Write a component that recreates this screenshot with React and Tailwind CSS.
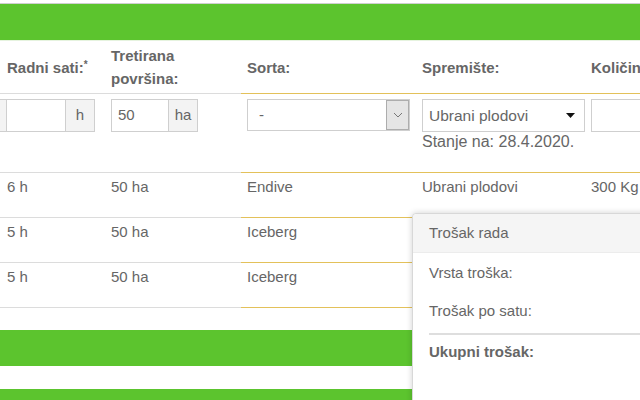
import React from "react";

function Line() {
  return (
    <div className="flex h-px">
      <div className="w-[241px] shrink-0 bg-[#dcdcdc]" />
      <div className="flex-1 bg-[#e3c15a]" />
    </div>
  );
}

function DataRow({ hours, area, sort, store, qty }) {
  return (
    <div className="flex h-[44px] pt-[5px] text-[15px] leading-[18px] text-[#666]">
      <div className="w-[104px] shrink-0 pl-[7px]">{hours}</div>
      <div className="w-[137px] shrink-0 pl-[7px]">{area}</div>
      <div className="w-[175px] shrink-0 pl-[6px]">{sort}</div>
      <div className="w-[169px] shrink-0 pl-[6px]">{store}</div>
      <div className="min-w-0 flex-1 pl-[6px] whitespace-nowrap">{qty}</div>
    </div>
  );
}

export default function App() {
  return (
    <div
      className="relative w-[640px] h-[400px] overflow-hidden bg-white"
      style={{ fontFamily: '"Liberation Sans", Arial, sans-serif' }}
    >
      <div className="h-[3px] bg-white border-b border-[#cfcfcf] box-content" />
      <div className="h-[36px] bg-[#5cc42e]" />
      <div className="h-px bg-[#e6f3df]" />

      {/* header */}
      <div className="flex h-[52px] items-center text-[15px] font-bold text-[#666] leading-[23px]">
        <div className="w-[104px] shrink-0 pl-[7px] whitespace-nowrap">
          Radni sati:<span className="text-[10px] align-top relative top-[-3px]">*</span>
        </div>
        <div className="w-[137px] shrink-0 pl-[7px]">
          Tretirana
          <br />
          površina:
        </div>
        <div className="w-[175px] shrink-0 pl-[6px]">Sorta:</div>
        <div className="w-[169px] shrink-0 pl-[6px]">Spremište:</div>
        <div className="min-w-0 flex-1 pl-[6px] whitespace-nowrap overflow-hidden">Količina:</div>
      </div>
      <Line />

      {/* input row */}
      <div className="flex h-[78px] pt-[5px] text-[15px] text-[#666]">
        <div className="w-[104px] shrink-0 flex items-start">
          <div className="w-[7px] h-[33px] bg-[#f3f3f3] border border-l-0 border-[#cfcfcf]" />
          <div className="w-[58px] h-[33px] border-y border-[#cfcfcf]" />
          <div className="w-[30px] h-[33px] bg-[#f3f3f3] border border-[#cfcfcf] flex items-center justify-center">
            h
          </div>
        </div>
        <div className="w-[137px] shrink-0 pl-[7px] flex items-start">
          <div className="w-[57px] h-[33px] border border-r-0 border-[#cfcfcf] flex items-center pl-[6px]">
            50
          </div>
          <div className="w-[30px] h-[33px] bg-[#f3f3f3] border border-[#cfcfcf] flex items-center justify-center">
            ha
          </div>
        </div>
        <div className="w-[175px] shrink-0 pl-[6px]">
          <div className="w-[163px] h-[32px] border border-[#cfcfcf] flex items-center justify-between">
            <span className="pl-[11px]">-</span>
            <div className="w-[23px] h-[30px] bg-[#e5e5e5] border border-[#adadad] flex items-center justify-center">
              <svg width="10" height="6" viewBox="0 0 10 6" fill="none">
                <path d="M1 1l4 4 4-4" stroke="#777" strokeWidth="1" />
              </svg>
            </div>
          </div>
        </div>
        <div className="w-[169px] shrink-0 pl-[6px]">
          <div className="w-[163px] h-[33px] border border-[#cfcfcf] flex items-center justify-between pl-[6px] pr-[9px] text-[15.5px]">
            <span>Ubrani plodovi</span>
            <svg width="9" height="5" viewBox="0 0 9 5">
              <path d="M0 0h9L4.5 5z" fill="#111" />
            </svg>
          </div>
          <div className="text-[16px] leading-[20px]">Stanje na: 28.4.2020.</div>
        </div>
        <div className="min-w-0 flex-1 pl-[6px]">
          <div className="w-[80px] h-[33px] border border-[#cfcfcf]" />
        </div>
      </div>
      <Line />
      <DataRow hours="6 h" area="50 ha" sort="Endive" store="Ubrani plodovi" qty="300 Kg" />
      <Line />
      <DataRow hours="5 h" area="50 ha" sort="Iceberg" store="" qty="" />
      <Line />
      <DataRow hours="5 h" area="50 ha" sort="Iceberg" store="" qty="" />
      <Line />

      <div className="h-[22px]" />
      <div className="h-[36px] bg-[#5cc42e]" />
      <div className="h-[23px]" />
      <div className="h-[40px] bg-[#5cc42e]" />

      {/* popover */}
      <div className="absolute left-[412px] top-[213px] w-[260px] h-[220px] bg-white border border-[#d8d8d8] rounded-tl-[4px] shadow-[0_0_6px_rgba(0,0,0,0.18)] text-[15px] text-[#666]">
        <div className="h-[39px] bg-[#f5f5f5] border-b border-[#ececec] flex items-center pl-[16px] rounded-tl-[4px]">
          Trošak rada
        </div>
        <div className="pl-[16px]">
          <div className="h-[39px] flex items-center pt-[2px]">Vrsta troška:</div>
          <div className="h-[39px] flex items-center">Trošak po satu:</div>
          <div className="h-[2px] bg-[#dedede] mt-[2px]" />
          <div className="h-[34px] flex items-center font-bold">Ukupni trošak:</div>
        </div>
      </div>
    </div>
  );
}
